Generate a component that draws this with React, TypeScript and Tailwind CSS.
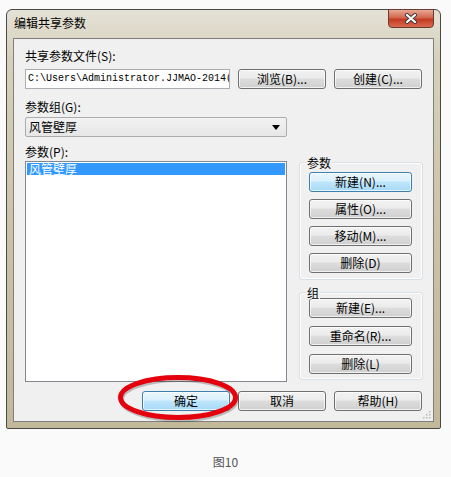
import React from 'react';

const cjk = "font-['Noto_Sans_CJK_SC',sans-serif]";

const grayBtn =
  'border-[#707070] bg-[linear-gradient(#f2f2f2,#ebebeb_45%,#dddddd_50%,#cfcfcf)]';
const blueBtn =
  'border-[#3c7fb1] bg-[linear-gradient(#eaf6fd,#d9f0fc_45%,#bee6fd_50%,#a7d9f5)]';

const Btn = ({
  label,
  blue = false,
  wide = false,
}: {
  label: string;
  blue?: boolean;
  wide?: boolean;
}) => (
  <div
    className={`${wide ? 'w-[103px]' : 'w-[88px]'} h-[20px] shrink-0 rounded-[3px] border ${
      blue ? blueBtn : grayBtn
    } shadow-[inset_0_0_0_1px_rgba(255,255,255,0.7)] flex items-center justify-center text-[12px] leading-[14px] text-black`}
  >
    {label}
  </div>
);

const GroupBox = ({
  title,
  children,
  className,
}: {
  title: string;
  children: React.ReactNode;
  className: string;
}) => (
  <div
    className={`relative w-[124px] rounded-[3px] border border-[#d5dfe5] shadow-[inset_0_0_0_1px_#ffffff] pl-[9px] flex flex-col ${className}`}
  >
    <span className="absolute left-[6px] -top-[7px] bg-[#f0f0f0] px-[1px] text-[12px] leading-[13px] text-black">
      {title}
    </span>
    {children}
  </div>
);

const App = () => {
  return (
    <div className={`relative w-[451px] h-[477px] bg-[#fafafa] pt-[9px] pl-[6px] ${cjk}`}>
      {/* window */}
      <div className="w-[435px] h-[420px] rounded-t-[6px] rounded-b-[2px] border border-[#4a4a44] bg-[linear-gradient(#e4e1d6,#d6d0ba_12%,#c9c1a5_60%,#c2b99b)] px-[6px] pb-[6px] flex flex-col">
        {/* title bar */}
        <div className="h-[28px] flex items-start">
          <span className="pl-[1px] pt-[6px] text-[12px] leading-[14px] text-black">编辑共享参数</span>
          <div className="ml-auto -mt-[1px] w-[46px] h-[19px] rounded-b-[4px] border border-[#6b3a2e] bg-[linear-gradient(#e7a896,#d2664d_45%,#c23a22_55%,#d96a4f)] flex items-center justify-center">
            <svg width="14" height="11" viewBox="0 0 14 11">
              <path d="M3 2 L11 9 M11 2 L3 9" stroke="#3a3a3a" strokeWidth="4" strokeLinecap="round" />
              <path d="M3 2 L11 9 M11 2 L3 9" stroke="#ffffff" strokeWidth="2.2" strokeLinecap="round" />
            </svg>
          </div>
        </div>

        {/* client area */}
        <div className="relative flex-1 border border-[#7f7f7f] bg-[#f0f0f0] px-[11px] pt-[10px] text-[12px] leading-[14px] text-black">
          <div>共享参数文件(S):</div>
          <div className="mt-[6px] flex items-center gap-[8px]">
            <div className="w-[206px] h-[20px] border border-[#abadb3] bg-white pl-[2px] overflow-hidden whitespace-nowrap font-['Liberation_Mono',monospace] text-[10px] leading-[18px]">
              {'C:\\Users\\Administrator.JJMAO-2014('}
            </div>
            <Btn label="浏览(B)..." />
            <Btn label="创建(C)..." />
          </div>

          <div className="mt-[11px]">参数组(G):</div>
          <div className="mt-[3px] w-[262px] h-[20px] rounded-[2px] border border-[#acacac] bg-[linear-gradient(#f2f2f2,#e6e6e6)] flex items-center pl-[3px] pr-[6px]">
            <span>风管壁厚</span>
            <svg className="ml-auto" width="8" height="5" viewBox="0 0 8 5">
              <path d="M0 0 H8 L4 5 Z" fill="#000000" />
            </svg>
          </div>

          <div className="mt-[8px] flex">
            <div className="flex flex-col">
              <div>参数(P):</div>
              <div className="mt-[2px] w-[262px] h-[221px] border border-[#828790] bg-white p-[1px]">
                <div className="h-[12px] bg-[#3399ff] text-white leading-[12px] pl-[2px]">风管壁厚</div>
              </div>
            </div>

            <div className="ml-[12px] flex flex-col">
              <GroupBox title="参数" className="mt-[17px] h-[118px] pt-[9px] gap-[7px]">
                <Btn label="新建(N)..." blue wide />
                <Btn label="属性(O)..." wide />
                <Btn label="移动(M)..." wide />
                <Btn label="删除(D)" wide />
              </GroupBox>
              <GroupBox title="组" className="mt-[12px] h-[88px] pt-[5px] gap-[8px]">
                <Btn label="新建(E)..." wide />
                <Btn label="重命名(R)..." wide />
                <Btn label="删除(L)" wide />
              </GroupBox>
            </div>
          </div>

          <div className="mt-[9px] flex justify-end gap-[8px]">
            <Btn label="确定" blue />
            <Btn label="取消" />
            <Btn label="帮助(H)" />
          </div>

          {/* size grip */}
          <svg className="absolute right-[2px] bottom-[2px]" width="10" height="10" viewBox="0 0 10 10">
            {[
              [8, 2],
              [5, 5],
              [8, 5],
              [2, 8],
              [5, 8],
              [8, 8],
            ].map(([x, y]) => (
              <rect key={`${x}-${y}`} x={x} y={y} width="1.5" height="1.5" fill="#b8b8b8" />
            ))}
          </svg>
        </div>
      </div>

      {/* caption */}
      <div className="mt-[26px] -ml-[6px] text-center text-[12px] leading-[14px] text-[#555555]">图10</div>

      {/* red annotation ring */}
      <svg className="absolute left-[114px] top-[372px]" width="128" height="54" viewBox="0 0 128 54">
        <ellipse cx="65" cy="27.5" rx="57.5" ry="20" fill="none" stroke="rgba(0,0,0,0.22)" strokeWidth="5" />
        <ellipse cx="64" cy="25.5" rx="57.5" ry="20" fill="none" stroke="#e4000d" strokeWidth="5" />
      </svg>
    </div>
  );
};

export default App;
